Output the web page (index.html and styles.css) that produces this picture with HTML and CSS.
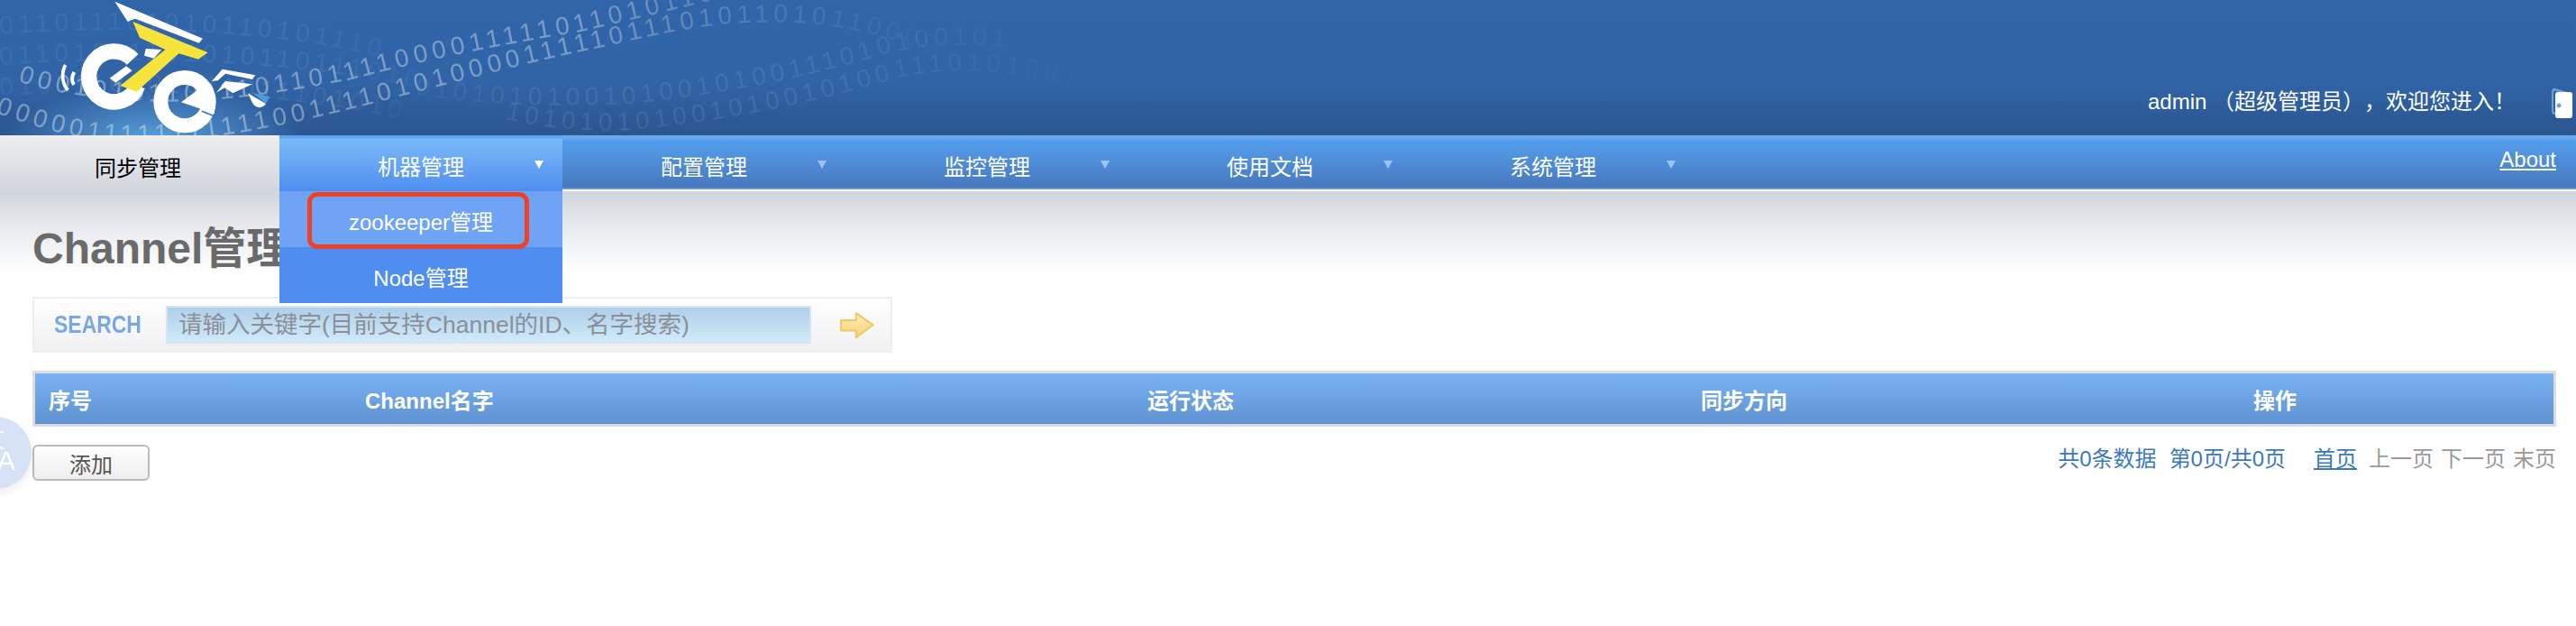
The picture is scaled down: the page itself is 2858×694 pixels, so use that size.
FILE: index.html
```html
<!DOCTYPE html>
<html lang="zh-CN">
<head>
    <meta charset="UTF-8">
    <title>Channel管理</title>
    <link rel="stylesheet" href="styles.css">
</head>
<body>
    <header class="top-header">
        <!-- binary digits behind the logo -->
        <svg class="digits" width="2858" height="150" viewBox="0 0 2858 150">
            <defs>
                <linearGradient id="fadeBright" gradientUnits="userSpaceOnUse" x1="0" y1="0" x2="1060" y2="0">
                    <stop offset="0" stop-color="#fff" stop-opacity=".38"/>
                    <stop offset=".6" stop-color="#fff" stop-opacity=".36"/>
                    <stop offset=".8" stop-color="#fff" stop-opacity=".14"/>
                    <stop offset="1" stop-color="#fff" stop-opacity="0"/>
                </linearGradient>
                <linearGradient id="fadeDim" gradientUnits="userSpaceOnUse" x1="420" y1="0" x2="1250" y2="0">
                    <stop offset="0" stop-color="#fff" stop-opacity=".02"/>
                    <stop offset=".2" stop-color="#fff" stop-opacity=".09"/>
                    <stop offset=".6" stop-color="#fff" stop-opacity=".09"/>
                    <stop offset="1" stop-color="#fff" stop-opacity="0"/>
                </linearGradient>
                <linearGradient id="fadeLeft" gradientUnits="userSpaceOnUse" x1="0" y1="0" x2="500" y2="0">
                    <stop offset="0" stop-color="#fff" stop-opacity=".06"/>
                    <stop offset=".6" stop-color="#fff" stop-opacity=".08"/>
                    <stop offset="1" stop-color="#fff" stop-opacity=".02"/>
                </linearGradient>
                <path id="row1" d="M-5,125 C40,140 80,155 140,158 C220,158 260,148 320,137 C420,115 560,75 640,58 C700,46 760,28 830,25 C900,22 960,30 1040,62"/>
                <path id="row2" d="M20,90 C60,105 140,115 220,112 C280,108 340,98 390,88 C450,72 550,50 640,36 C700,22 760,8 830,-10"/>
                <path id="row3" d="M440,100 C520,118 620,118 700,115 C800,105 900,85 980,60 C1060,40 1150,50 1260,85"/>
                <path id="row4" d="M560,132 C620,145 660,146 700,144 C800,135 900,115 1000,85 C1080,70 1160,80 1250,120"/>
                <path id="row5" d="M0,38 C100,30 300,28 430,66"/>
                <path id="row6" d="M0,72 C100,64 320,60 490,104"/>
                <path id="row7" d="M0,106 C100,100 300,94 470,138"/>
            </defs>
            <text class="digit-row fill-left"><textPath href="#row5">0110111010101101011100</textPath></text>
            <text class="digit-row fill-left"><textPath href="#row6">01101011101010110111010</textPath></text>
            <text class="digit-row fill-left"><textPath href="#row7">0101110101011011101010</textPath></text>
            <text class="digit-row fill-dim"><textPath href="#row3">101010101001010010100111010100101</textPath></text>
            <text class="digit-row fill-dim"><textPath href="#row4">1010101010010100101001110101001</textPath></text>
            <text class="digit-row fill-bright"><textPath href="#row1">00000111111111110011110101000011111011101011010110000111010111100001110</textPath></text>
            <text class="digit-row fill-bright"><textPath href="#row2">0001010110111011011110000111110110101100001</textPath></text>
        </svg>

        <svg class="logo" width="260" height="150" viewBox="0 0 780 450">
            <g fill="none" stroke="#fff" stroke-linecap="butt">
                <path d="M291.4,197.7 A84,84 0 1 0 308,285" stroke-width="52"/>
                <circle cx="465" cy="338" r="80" stroke-width="48"/>
                <path d="M68,216 C52,245 58,280 76,300" stroke-width="11"/>
                <path d="M97,240 C88,255 88,270 96,282" stroke-width="12"/>
            </g>
            <g fill="#fff">
                <path d="M232,5 L525,128 L512,143 L300,62 L275,72 Z"/>
                <path d="M335,162 L388,165 L362,194 L330,185 Z"/>
                <path d="M215,260 L270,220 L290,235 L235,275 Z"/>
                <path d="M453,340 L520,290 L560,310 L564,378 Z"/>
                <path d="M555,270 L590,230 L700,250 L690,264 L600,245 L575,268 Z"/>
                <path d="M570,308 L600,270 L690,280 L625,310 L598,292 Z"/>
                <path d="M675,310 L735,345 C725,362 700,362 690,342 Z"/>
            </g>
            <path d="M522,370 L578,392" stroke="#3576bd" stroke-width="5" fill="none"/>
            <path d="M690,308 L748,322 L735,345 Z" fill="#4d9be0"/>
            <path d="M292,72 L542,175 L510,197 L445,178 L305,305 L250,285 L400,165 L315,125 Z" fill="#f6e43c"/>
        </svg>

        <div class="user-info">
            <span class="welcome">admin （超级管理员），欢迎您进入！</span>
            <svg class="logout" width="24" height="34" viewBox="0 0 24 34">
                <path d="M1,5 C1,2 3,0 5,1 L18,5 L18,30 L5,30 C2,30 1,28 1,26 Z" fill="#6f9fdc"/>
                <path d="M3,6 C3,4 4,3 6,4 L18,7 L18,28 L5,28 C4,28 3,27 3,26 Z" fill="#2f62a6"/>
                <rect x="5" y="5" width="19" height="29" rx="3" fill="#fff"/>
                <circle cx="9" cy="20" r="2.4" fill="#6f9fdc"/>
            </svg>
        </div>
    </header>

    <nav class="main-nav">
        <a class="nav-tab nav-current">同步管理</a>
        <div class="nav-tab nav-open has-caret">
            机器管理
            <div class="dropdown">
                <a class="dropdown-item item-hover">zookeeper管理</a>
                <a class="dropdown-item">Node管理</a>
            </div>
        </div>
        <a class="nav-tab has-caret">配置管理</a>
        <a class="nav-tab has-caret">监控管理</a>
        <a class="nav-tab has-caret">使用文档</a>
        <a class="nav-tab has-caret">系统管理</a>
        <a class="about-link">About</a>
    </nav>

    <main class="content">
        <h1 class="page-title">Channel管理</h1>

        <form class="search-box">
            <span class="search-label">SEARCH</span>
            <input class="search-input" type="text" placeholder="请输入关键字(目前支持Channel的ID、名字搜索)">
            <svg class="search-go" width="38" height="31" viewBox="97 58 113 92">
                <defs>
                    <linearGradient id="goFill" x1="0" y1="0" x2="0" y2="1">
                        <stop offset="0" stop-color="#fdf0b4"/>
                        <stop offset="1" stop-color="#f9cf78"/>
                    </linearGradient>
                </defs>
                <path d="M100,88 L150,88 L150,64 L206,103 L150,145 L150,122 L100,122 Z" fill="url(#goFill)" stroke="#ecc86e" stroke-width="6" stroke-linejoin="round"/>
            </svg>
        </form>

        <table class="data-table">
            <thead>
                <tr>
                    <th class="col-no">序号</th>
                    <th class="col-name">Channel名字</th>
                    <th class="col-status">运行状态</th>
                    <th class="col-direction">同步方向</th>
                    <th class="col-action">操作</th>
                </tr>
            </thead>
        </table>

        <div class="table-footer">
            <button class="add-btn" type="button">添加</button>
            <div class="pager">
                <span class="pager-count">共0条数据</span>
                <span class="pager-pages">第0页/共0页</span>
                <a class="pager-first">首页</a>
                <span class="pager-off">上一页</span>
                <span class="pager-off">下一页</span>
                <span class="pager-off">末页</span>
            </div>
        </div>
    </main>

    <div class="translate-ball">
        <span class="ball-zh">文</span>
        <span class="ball-en">A</span>
    </div>
</body>
</html>
```

FILE: styles.css
```css
*, *::after {
    box-sizing: border-box;
}
body {
    font-family: "Liberation Sans", "Noto Sans CJK SC", Arial, sans-serif;
    font-size: 24px;
    background-color: #fff;
    margin: 0;
    height: 694px;
    overflow: hidden;
}
a {
    text-decoration: none;
}

/* header */
.top-header {
    position: relative;
    height: 150px;
    padding: 0 4px 19px 0;
    display: flex;
    justify-content: flex-end;
    align-items: flex-end;
    overflow: hidden;
    background:
        radial-gradient(ellipse 170px 60px at 170px 155px, rgba(95, 175, 235, 0.85), rgba(95, 175, 235, 0)),
        linear-gradient(to bottom, #3065a9 0%, #3064a7 60%, #2b558f 100%);
}
.digits {
    position: absolute;
    left: 0;
    top: 0;
    filter: blur(0.6px);
}
.digit-row {
    font-family: "Liberation Sans", sans-serif;
    font-size: 28px;
    letter-spacing: 5.4px;
}
.fill-bright {
    fill: url(#fadeBright);
}
.fill-dim {
    fill: url(#fadeDim);
}
.fill-left {
    fill: url(#fadeLeft);
}
.logo {
    position: absolute;
    left: 50px;
    top: 0;
    filter: blur(0.7px);
}
.user-info {
    position: relative;
    display: flex;
    align-items: flex-end;
    gap: 39px;
    color: #fff;
}
.welcome {
    line-height: 32px;
    margin-bottom: 2px;
    text-spacing-trim: space-all;
}
.logout {
    display: block;
    filter: blur(0.4px);
}

/* nav bar */
.main-nav {
    display: flex;
    height: 62px;
    padding-bottom: 2px;
    background:
        linear-gradient(to bottom, #68a8ef 0, #68a8ef 4px, #549fee 5px, #4878bd 58px, #7c9fd6 59px, #7c9fd6 60px, #fff 60px);
    position: relative;
}
.nav-tab {
    position: relative;
    width: 314px;
    height: 60px;
    padding-top: 7px;
    display: flex;
    justify-content: center;
    align-items: center;
    color: #fff;
}
.nav-current {
    width: 310px;
    height: 62px;
    padding-right: 4px;
    color: #000;
    background: linear-gradient(to bottom, #eeeef0, #d2d6de);
}
.nav-open {
    height: 62px;
    padding-top: 5px;
    background: linear-gradient(to bottom, #5ea5f0 0, #5ea5f0 3px, #7bbaf8 4px, #4f8ef0 100%);
}
.has-caret::after {
    content: "";
    position: absolute;
    left: 283px;
    top: 28px;
    width: 10px;
    height: 9px;
    border-left: 5px solid transparent;
    border-right: 5px solid transparent;
    border-top: 9px solid #a0c4f0;
}
.nav-open.has-caret::after {
    border-top-color: #fff;
}
.dropdown {
    position: absolute;
    left: 0;
    top: 62px;
    width: 314px;
    z-index: 5;
}
.dropdown-item {
    position: relative;
    display: flex;
    justify-content: center;
    align-items: center;
    height: 62px;
    padding-top: 2px;
    color: #fff;
    background-color: #4f8ef0;
}
.item-hover {
    z-index: 1;
    background-color: #6ea3f5;
}
.item-hover::after {
    content: "";
    position: absolute;
    left: 31px;
    top: 1px;
    width: 246px;
    height: 63px;
    border: 5px solid #ee4125;
    border-radius: 11px;
}
.about-link {
    position: absolute;
    right: 22px;
    top: 13px;
    color: #fff;
    text-decoration: underline;
}

/* page */
.content {
    height: 482px;
    padding: 0 22px 0 36px;
    background: linear-gradient(to bottom, #d0d4dc 0, #e8e9ee 38px, #f5f6f8 68px, #fff 90px);
}
.page-title {
    font-size: 48px;
    font-weight: bold;
    line-height: 56px;
    color: #6a6a6a;
    margin: 0;
    padding-top: 36px;
    height: 117px;
}
.search-box {
    display: flex;
    align-items: center;
    width: 954px;
    height: 62px;
    margin: 0;
    border: 2px solid #eeeef0;
    background: linear-gradient(to bottom, #fff, #f0f0f2);
}
.search-label {
    display: inline-block;
    font-size: 28px;
    font-weight: bold;
    color: #78a8e2;
    margin-left: 22px;
    width: 124px;
    transform: scaleX(0.82);
    transform-origin: left center;
}
.search-input {
    width: 716px;
    height: 42px;
    padding: 0 12px;
    border: 2px solid #d8e4f0;
    background: linear-gradient(to bottom, #aecfeb, #d0ebf8);
    font-family: inherit;
    font-size: 26.5px;
}
.search-input::placeholder {
    color: #8a8f98;
    opacity: 1;
}
.search-go {
    margin-left: 32px;
}
.data-table {
    width: 100%;
    height: 62px;
    margin-top: 20px;
    table-layout: fixed;
    border-collapse: separate;
    border-spacing: 0;
    border: 3px solid #ddd;
    border-bottom-color: #d8dce4;
    background: linear-gradient(to bottom, #7ab3f6, #5f92d0);
}
.data-table th {
    padding: 0 0 0 15px;
    font-size: 24px;
    font-weight: bold;
    color: #fff;
    text-align: left;
}
.col-no {
    width: 351px;
}
.col-name {
    width: 868px;
}
.col-status {
    width: 614px;
}
.col-direction {
    width: 613px;
}
.col-action {
    width: 348px;
}
.table-footer {
    display: flex;
    justify-content: space-between;
    align-items: flex-start;
    margin-top: 20px;
}
.add-btn {
    width: 130px;
    height: 40px;
    padding: 0;
    border: 2px solid #bbb;
    border-radius: 6px;
    background: linear-gradient(to bottom, #fff, #eee);
    font-family: inherit;
    font-size: 24px;
    color: #555;
}
.pager {
    display: flex;
    line-height: 32px;
    color: #3a78c0;
}
.pager-pages {
    margin-left: 14px;
}
.pager-first {
    margin-left: 31px;
    margin-right: 13px;
    color: #3a78c0;
    text-decoration: underline;
}
.pager-off {
    margin-right: 8px;
    color: #999;
}
.pager-off:last-child {
    margin-right: 0;
}

/* floating translate button, cut off by the window edge */
.translate-ball {
    position: fixed;
    left: -45px;
    top: 462px;
    width: 80px;
    height: 80px;
    border-radius: 50%;
    background-color: #d6e3f6;
    box-shadow: 0 4px 10px rgba(0, 0, 0, 0.08);
    color: #fff;
    overflow: hidden;
}
.ball-zh {
    position: absolute;
    left: 24px;
    top: 4px;
    font-size: 26px;
}
.ball-en {
    position: absolute;
    left: 42px;
    top: 32px;
    font-size: 30px;
    line-height: 34px;
}
```
